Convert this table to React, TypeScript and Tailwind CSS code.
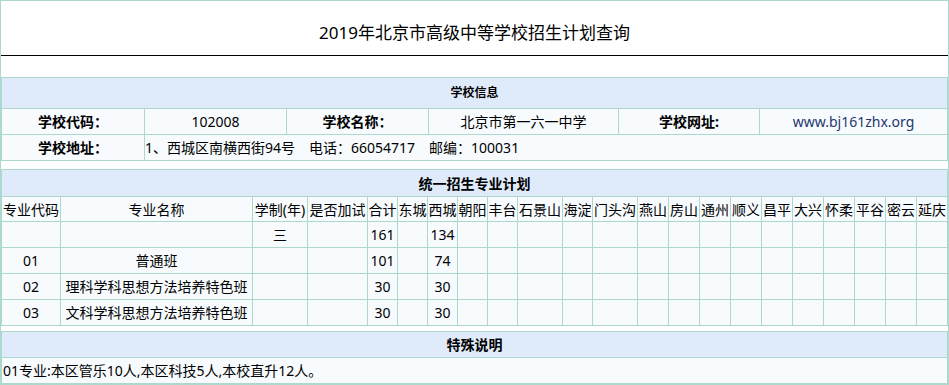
const line = "border-[#acd8cd]";
const cell = `flex items-center justify-center whitespace-nowrap border-r border-b ${line} bg-[#f7fbfe]`;
const head = `flex items-center justify-center whitespace-nowrap border-r border-b ${line} bg-[#dfebfa] font-bold`;

const planHeaders = [
  "专业代码",
  "专业名称",
  "学制(年)",
  "是否加试",
  "合计",
  "东城",
  "西城",
  "朝阳",
  "丰台",
  "石景山",
  "海淀",
  "门头沟",
  "燕山",
  "房山",
  "通州",
  "顺义",
  "昌平",
  "大兴",
  "怀柔",
  "平谷",
  "密云",
  "延庆",
];

const planRows = [
  ["", "", "三", "", "161", "", "134"],
  ["01", "普通班", "", "", "101", "", "74"],
  ["02", "理科学科思想方法培养特色班", "", "", "30", "", "30"],
  ["03", "文科学科思想方法培养特色班", "", "", "30", "", "30"],
];

function SchoolInfo() {
  return (
    <div className={`grid grid-cols-[143px_142px_142px_190px_141px_188px] border-l border-t ${line}`}>
      <div className={`${head} col-span-6 h-[31px] text-[12px]`}>学校信息</div>

      <div className={`${cell} h-[26px] font-bold`}>学校代码：</div>
      <div className={`${cell} h-[26px]`}>102008</div>
      <div className={`${cell} h-[26px] font-bold`}>学校名称：</div>
      <div className={`${cell} h-[26px]`}>北京市第一六一中学</div>
      <div className={`${cell} h-[26px] font-bold`}>学校网址:</div>
      <div className={`${cell} h-[26px] text-[#25366e]`}>www.bj161zhx.org</div>

      <div className={`${cell} h-[26px] font-bold`}>学校地址：</div>
      <div className={`${cell} col-span-5 h-[26px] !justify-start`}>
        1、西城区南横西街94号　电话：66054717　邮编：100031
      </div>
    </div>
  );
}

function EnrollmentPlan() {
  return (
    <div
      className={`mt-[8px] grid grid-cols-[59px_192px_55px_60px_30px_30px_30px_30px_30px_45px_30px_45px_31px_31px_31px_31px_31px_31px_31px_31px_31px_31px] border-l border-t ${line}`}
    >
      <div className={`${head} col-span-full h-[27px]`}>统一招生专业计划</div>

      {planHeaders.map((title) => (
        <div key={title} className={`${cell} h-[25px]`}>
          {title}
        </div>
      ))}

      {planRows.map((row, rowIndex) =>
        planHeaders.map((_, colIndex) => (
          <div key={`${rowIndex}-${colIndex}`} className={`${cell} h-[26px]`}>
            {row[colIndex] ?? ""}
          </div>
        )),
      )}
    </div>
  );
}

function SpecialNote() {
  return (
    <div className={`mt-[5px] flex flex-col border-l border-t ${line}`}>
      <div className={`${head} h-[26px]`}>特殊说明</div>
      <div className={`${cell} h-[26px] !justify-start pl-px`}>
        01专业:本区管乐10人,本区科技5人,本校直升12人。
      </div>
    </div>
  );
}

export default function App() {
  return (
    <div
      className={`w-[949px] border ${line} bg-white text-[14px] text-black`}
      style={{ fontFamily: '"Noto Sans", "Noto Sans CJK SC", sans-serif' }}
    >
      <div className="flex h-[55px] items-center justify-center border-b border-black pt-[10px] text-[17px]">
        2019年北京市高级中等学校招生计划查询
      </div>

      <div className="mt-[21px]">
        <SchoolInfo />
        <EnrollmentPlan />
        <SpecialNote />
      </div>
    </div>
  );
}
